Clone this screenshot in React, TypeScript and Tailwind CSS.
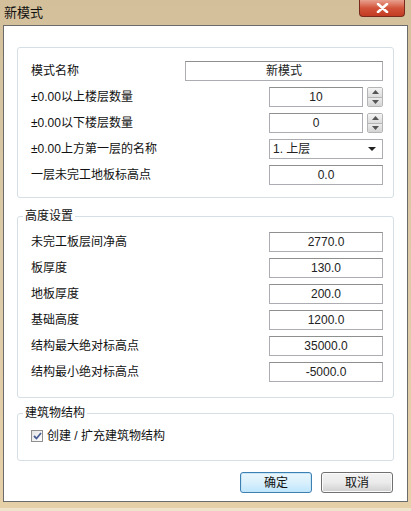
import React from "react";

const font = { fontFamily: '"Liberation Sans", "Noto Sans CJK SC", sans-serif' };

function Field({ value, w = "w-[114px]", align = "text-center" }: { value: string; w?: string; align?: string }) {
    return (
        <div className={`${w} h-[20px] border border-[#abadb3] border-t-[#8e8f8f] bg-white flex items-center justify-center text-[12px] leading-none text-[#222] ${align}`}>
            {value}
        </div>
    );
}

function Spin({ value }: { value: string }) {
    return (
        <div className="flex items-center gap-[4px]">
            <Field value={value} w="w-[94px]" />
            <div className="w-[16px] h-[20px] flex flex-col border border-[#b5b5b5] rounded-[2px] overflow-hidden">
                <div className="flex-1 flex items-center justify-center bg-gradient-to-b from-[#f4f4f4] to-[#dcdcdc] border-b border-[#b5b5b5]">
                    <svg width="7" height="4" viewBox="0 0 7 4"><path d="M0 4 L3.5 0 L7 4 Z" fill="#555" /></svg>
                </div>
                <div className="flex-1 flex items-center justify-center bg-gradient-to-b from-[#ececec] to-[#d4d4d4]">
                    <svg width="7" height="4" viewBox="0 0 7 4"><path d="M0 0 L3.5 4 L7 0 Z" fill="#555" /></svg>
                </div>
            </div>
        </div>
    );
}

function Row({ label, children }: { label: string; children: React.ReactNode }) {
    return (
        <div className="flex items-center justify-between h-[20px]">
            <span className="text-[12px] text-[#111] leading-none">{label}</span>
            {children}
        </div>
    );
}

function Group({ title, children, className = "" }: { title?: string; children: React.ReactNode; className?: string }) {
    return (
        <div className={`relative border border-[#d5dfe5] rounded-[3px] ${className}`}>
            {title && (
                <span className="absolute -top-[8px] left-[5px] bg-white px-[2px] text-[12px] leading-[15px] text-[#111]">{title}</span>
            )}
            {children}
        </div>
    );
}

export default function App() {
    const heights = [
        ["未完工板层间净高", "2770.0"],
        ["板厚度", "130.0"],
        ["地板厚度", "200.0"],
        ["基础高度", "1200.0"],
        ["结构最大绝对标高点", "35000.0"],
        ["结构最小绝对标高点", "-5000.0"],
    ];

    return (
        <div className="w-[411px] h-[511px] bg-[#efe3cc] overflow-hidden" style={font}>
            <div className="w-[411px] h-[508px] bg-gradient-to-b from-[#d3c09b] via-[#dccaa8] to-[#e6d0a8] flex flex-col">
                <div className="h-[25px] flex items-start justify-between pl-[4px] pr-[6px]">
                    <span className="text-[13px] leading-none mt-[6px] text-[#111]">新模式</span>
                    <div className="w-[46px] h-[17px] rounded-b-[4px] border border-[#7a2a1c] border-t-0 bg-gradient-to-b from-[#e8a08f] via-[#d2543a] to-[#c23a22] flex items-center justify-center">
                        <svg width="13" height="10" viewBox="0 0 13 10">
                            <path d="M2 1 L11 9 M11 1 L2 9" stroke="#fff" strokeWidth="2.6" strokeLinecap="round" />
                        </svg>
                    </div>
                </div>
                <div className="mx-[3px] mb-[6px] flex-1 bg-white border border-[#6b6b6b] pt-[21px] pl-[13px] pr-[13px] flex flex-col">
                    <Group className="pt-[13px] pb-[12px] pl-[13px] pr-[10px] flex flex-col gap-[6px]">
                        <Row label="模式名称">
                            <Field value="新模式" w="w-[198px]" />
                        </Row>
                        <Row label="±0.00以上楼层数量">
                            <Spin value="10" />
                        </Row>
                        <Row label="±0.00以下楼层数量">
                            <Spin value="0" />
                        </Row>
                        <Row label="±0.00上方第一层的名称">
                            <div className="w-[114px] h-[20px] border border-[#abadb3] bg-white flex items-center justify-between pl-[3px] pr-[6px] text-[12px] leading-none text-[#222]">
                                <span>1. 上层</span>
                                <svg width="8" height="4" viewBox="0 0 8 4"><path d="M0 0 L8 0 L4 4 Z" fill="#222" /></svg>
                            </div>
                        </Row>
                        <Row label="一层未完工地板标高点">
                            <Field value="0.0" />
                        </Row>
                    </Group>

                    <Group title="高度设置" className="mt-[18px] pt-[15px] pb-[15px] pl-[13px] pr-[10px] flex flex-col gap-[6px]">
                        {heights.map(([l, v]) => (
                            <Row key={l} label={l}>
                                <Field value={v} />
                            </Row>
                        ))}
                    </Group>

                    <Group title="建筑物结构" className="mt-[15px] pt-[16px] pb-[18px] pl-[13px]">
                        <div className="flex items-center gap-[4px] h-[12px]">
                            <div className="w-[12px] h-[12px] border border-[#8f8f8f] bg-gradient-to-br from-[#e4e4e4] to-[#ffffff] flex items-center justify-center">
                                <svg width="9" height="8" viewBox="0 0 9 8"><path d="M1 4 L3.5 6.5 L8 1" stroke="#4a5f97" strokeWidth="1.8" fill="none" /></svg>
                            </div>
                            <span className="text-[12px] leading-none text-[#111]">创建 / 扩充建筑物结构</span>
                        </div>
                    </Group>

                    <div className="flex justify-end gap-[9px] mt-[11px] pr-[1px]">
                        <button className="w-[72px] h-[21px] rounded-[3px] border border-[#3c7fb1] bg-gradient-to-b from-[#eaf6fd] via-[#d9f0fc] to-[#bee6fd] text-[12px] leading-none text-[#111] shadow-[inset_0_0_0_1px_#c6e6f7]" style={font}>
                            确定
                        </button>
                        <button className="w-[72px] h-[21px] rounded-[3px] border border-[#707070] bg-gradient-to-b from-[#f2f2f2] via-[#ebebeb] to-[#cfcfcf] text-[12px] leading-none text-[#111] shadow-[inset_0_0_0_1px_#fbfbfb]" style={font}>
                            取消
                        </button>
                    </div>
                </div>
            </div>
        </div>
    );
}
